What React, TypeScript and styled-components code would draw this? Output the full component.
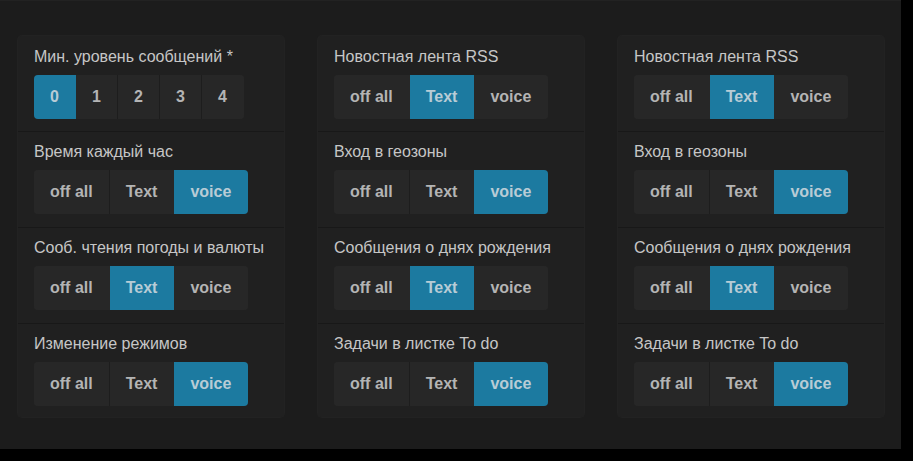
import React, { useState } from "react";
import styled, { createGlobalStyle } from "styled-components";

const Global = createGlobalStyle`
  html, body { margin: 0; padding: 0; background: #000; }
  body { font-family: "Liberation Sans", Arial, sans-serif; }
`;

const Page = styled.div`
  width: 901px;
  height: 449px;
  box-sizing: border-box;
  background: #1c1c1c;
  border-top: 1px solid #222;
  padding: 35px 17px 0 18px;
  display: grid;
  grid-template-columns: repeat(3, 266px);
  column-gap: 34px;
  align-items: start;
`;

const Card = styled.div`
  background: #202020;
  border-radius: 4px;
  box-shadow: 0 0 0 1px #222;
  display: flex;
  flex-direction: column;
`;

const Row = styled.div`
  padding: 10px 16px 13px 16px;
  border-top: 1px solid #181818;
  &:first-child {
    border-top-color: transparent;
    padding-bottom: 12px;
  }
  &:last-child {
    padding-bottom: 11px;
  }
`;

const Label = styled.div`
  font-size: 16px;
  line-height: 20px;
  color: #c6c6c6;
  margin-bottom: 8px;
  white-space: nowrap;
`;

const Group = styled.div`
  display: inline-flex;
  border-radius: 4px;
  overflow: hidden;
  background: #272727;
`;

const Btn = styled.button<{ $active?: boolean; $last?: boolean }>`
  font-family: "Liberation Sans", Arial, sans-serif;
  font-weight: bold;
  font-size: 16px;
  height: 44px;
  padding: 0 16px;
  margin: 0;
  border: none;
  border-right: 1px solid ${(p) => (p.$last ? "transparent" : "#1d1d1d")};
  background: ${(p) => (p.$active ? "#1c7aa0" : "#272727")};
  color: ${(p) => (p.$active ? "#b8ccd6" : "#b4b4b4")};
  cursor: pointer;
  min-width: 42px;
`;

type Setting = { label: string; options: string[]; active: number };

function Toggle({ s }: { s: Setting }) {
  const [v, setV] = useState(s.active);
  return (
    <Group>
      {s.options.map((o, i) => (
        <Btn
          key={o}
          $active={i === v}
          $last={i === s.options.length - 1 || i + 1 === v || i === v}
          onClick={() => setV(i)}
        >
          {o}
        </Btn>
      ))}
    </Group>
  );
}

const modes = ["off all", "Text", "voice"];

const col1: Setting[] = [
  { label: "Мин. уровень сообщений *", options: ["0", "1", "2", "3", "4"], active: 0 },
  { label: "Время каждый час", options: modes, active: 2 },
  { label: "Сооб. чтения погоды и валюты", options: modes, active: 1 },
  { label: "Изменение режимов", options: modes, active: 2 },
];

const colN: Setting[] = [
  { label: "Новостная лента RSS", options: modes, active: 1 },
  { label: "Вход в геозоны", options: modes, active: 2 },
  { label: "Сообщения о днях рождения", options: modes, active: 1 },
  { label: "Задачи в листке To do", options: modes, active: 2 },
];

function Column({ items }: { items: Setting[] }) {
  return (
    <Card>
      {items.map((s) => (
        <Row key={s.label}>
          <Label>{s.label}</Label>
          <Toggle s={s} />
        </Row>
      ))}
    </Card>
  );
}

export default function App() {
  return (
    <>
      <Global />
      <Page>
        <Column items={col1} />
        <Column items={colN} />
        <Column items={colN} />
      </Page>
    </>
  );
}
